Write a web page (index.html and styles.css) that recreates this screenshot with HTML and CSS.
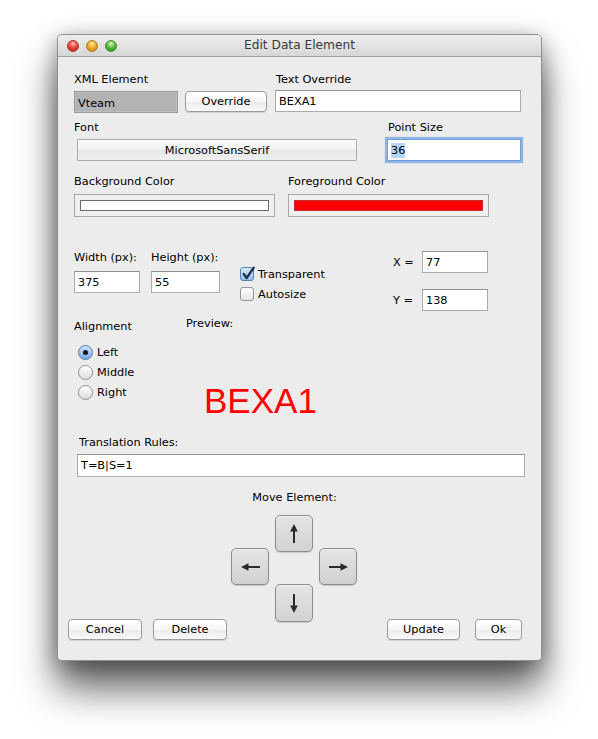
FILE: index.html
```html
<!DOCTYPE html>
<html>
<head>
<meta charset="utf-8">
<title>Edit Data Element</title>
<link rel="stylesheet" href="styles.css">
</head>
<body>
<div class="window">
  <div class="titlebar">
    <div class="lights">
      <span class="light red"></span>
      <span class="light yellow"></span>
      <span class="light green"></span>
    </div>
    <div class="title">Edit Data Element</div>
    <div></div>
  </div>
  <div class="content">
    <div class="row r1">
      <div class="c-xml">
        <div class="label">XML Element</div>
        <div class="hrow">
          <div class="field vteam">Vteam</div>
          <button class="btn override">Override</button>
        </div>
      </div>
      <div class="c-tov">
        <div class="label pl1">Text Override</div>
        <div class="field tov">BEXA1</div>
      </div>
    </div>

    <div class="row r2">
      <div class="c-font">
        <div class="label">Font</div>
        <button class="fontbtn">MicrosoftSansSerif</button>
      </div>
      <div class="c-pt">
        <div class="label pl1">Point Size</div>
        <div class="field pt focus"><span class="sel">36</span></div>
      </div>
    </div>

    <div class="row r3">
      <div class="c-bg">
        <div class="label">Background Color</div>
        <div class="well"><div class="swatch white"></div></div>
      </div>
      <div class="c-fg">
        <div class="label">Foreground Color</div>
        <div class="well"><div class="swatch red"></div></div>
      </div>
    </div>

    <div class="row r4">
      <div class="c-w">
        <div class="label">Width (px):</div>
        <div class="field wfield">375</div>
      </div>
      <div class="c-h">
        <div class="label">Height (px):</div>
        <div class="field hfield">55</div>
      </div>
      <div class="c-cb">
        <div class="cbrow">
          <span class="checkbox checked">
            <svg width="14" height="14" viewBox="0 0 14 14"><path d="M2.6 6.8 L5.6 11 L12.8 0.6" fill="none" stroke="#1b2b44" stroke-width="2.2" stroke-linecap="round" stroke-linejoin="round"/></svg>
          </span>
          <span>Transparent</span>
        </div>
        <div class="cbrow">
          <span class="checkbox"></span>
          <span>Autosize</span>
        </div>
      </div>
      <div class="c-xy">
        <div class="xyrow">
          <span class="xylabel">X =</span>
          <div class="field xyfield">77</div>
        </div>
        <div class="xyrow yrow">
          <span class="xylabel">Y =</span>
          <div class="field xyfield">138</div>
        </div>
      </div>
    </div>

    <div class="row r5">
      <div class="c-align">
        <div class="label">Alignment</div>
        <div class="radios">
          <div class="radiorow"><span class="radio on"><span class="dot"></span></span><span>Left</span></div>
          <div class="radiorow"><span class="radio"></span><span>Middle</span></div>
          <div class="radiorow"><span class="radio"></span><span>Right</span></div>
        </div>
      </div>
      <div class="c-prev">
        <div class="label">Preview:</div>
        <div class="preview">BEXA1</div>
      </div>
    </div>

    <div class="label tr-label">Translation Rules:</div>
    <div class="field trfield">T=B|S=1</div>

    <div class="bottom">
      <div class="bgroup">
        <button class="btn cancel">Cancel</button>
        <button class="btn delete">Delete</button>
      </div>
      <div class="move">
        <div class="label center">Move Element:</div>
        <div class="pad">
          <button class="abtn up">
            <svg width="8" height="19" viewBox="0 0 8 19"><path d="M4 0 L7.8 7.5 L0.2 7.5 Z" fill="#2a2a2a"/><rect x="3" y="6" width="2" height="13" fill="#2a2a2a"/></svg>
          </button>
          <button class="abtn left">
            <svg width="19" height="8" viewBox="0 0 19 8"><path d="M0 4 L7.5 0.2 L7.5 7.8 Z" fill="#2a2a2a"/><rect x="6" y="3" width="13" height="2" fill="#2a2a2a"/></svg>
          </button>
          <button class="abtn right">
            <svg width="19" height="8" viewBox="0 0 19 8"><path d="M19 4 L11.5 0.2 L11.5 7.8 Z" fill="#2a2a2a"/><rect x="0" y="3" width="13" height="2" fill="#2a2a2a"/></svg>
          </button>
          <button class="abtn down">
            <svg width="8" height="19" viewBox="0 0 8 19"><path d="M4 19 L7.8 11.5 L0.2 11.5 Z" fill="#2a2a2a"/><rect x="3" y="0" width="2" height="13" fill="#2a2a2a"/></svg>
          </button>
        </div>
      </div>
      <div class="bgroup">
        <button class="btn update">Update</button>
        <button class="btn ok">Ok</button>
      </div>
    </div>
  </div>
</div>
</body>
</html>
```

FILE: styles.css
```css
* { box-sizing: border-box; }

html, body {
  height: 739px;
}

body {
  margin: 0;
  overflow: hidden;
  background: #ffffff;
  font-family: "DejaVu Sans", "Liberation Sans", sans-serif;
  font-size: 11.3px;
  color: #000;
}

.window {
  margin: 34px 0 0 57px;
  width: 485px;
  height: 627px;
  background: #ececec;
  border: 1px solid #8f8f8f;
  border-radius: 5px 5px 4px 4px;
  box-shadow: 0 28px 38px rgba(0, 0, 0, 0.6), 0 4px 22px rgba(0, 0, 0, 0.35);
  overflow: hidden;
}

.titlebar {
  height: 22px;
  border-bottom: 1px solid #a2a2a2;
  background: linear-gradient(#eeeeee, #d7d7d7);
  display: grid;
  grid-template-columns: 1fr auto 1fr;
  align-items: center;
}

.lights {
  display: flex;
  gap: 7px;
  padding-left: 9px;
}

.light {
  width: 12px;
  height: 12px;
  border-radius: 50%;
}
.light.red {
  background: radial-gradient(circle at 50% 28%, #ffd2cc 0, #f5655a 30%, #d8291f 70%, #f0584c 100%);
  border: 1px solid #a8362e;
}
.light.yellow {
  background: radial-gradient(circle at 50% 28%, #fff0c0 0, #f6c145 30%, #de8f10 70%, #f5b83a 100%);
  border: 1px solid #b07a22;
}
.light.green {
  background: radial-gradient(circle at 50% 28%, #e4ffd6 0, #7fd05e 30%, #3a9e22 70%, #72c954 100%);
  border: 1px solid #4e8a36;
}

.title {
  font-size: 12.2px;
  color: #3a3a3a;
  line-height: 21px;
}

.content {
  padding: 16px 0 0 16px;
}

.row { display: flex; }

.label {
  line-height: 14px;
  white-space: nowrap;
}
.pl1 { padding-left: 1px; }
.center { text-align: center; }

.field {
  height: 22px;
  background: #ffffff;
  border: 1px solid #ababab;
  border-top-color: #8f8f8f;
  padding: 0 3px;
  display: flex;
  align-items: center;
  white-space: nowrap;
}

.btn {
  font: inherit;
  color: #000;
  height: 21px;
  padding: 0;
  border: 1px solid #9c9c9c;
  border-radius: 4px;
  background: linear-gradient(#ffffff, #f6f6f6 50%, #ececec 52%, #f8f8f8);
  box-shadow: 0 1px 1px rgba(0, 0, 0, 0.12);
  display: flex;
  align-items: center;
  justify-content: center;
}

/* row 1 */
.c-xml { width: 201px; }
.hrow {
  display: flex;
  align-items: flex-start;
  margin-top: 3px;
}
.vteam {
  width: 104px;
  margin-top: 1px;
  padding-top: 2px;
  background: #b3b3b3;
  border: 1px solid #9b9b9b;
  box-shadow: inset 0 0 0 1px #bdbdbd;
}
.override {
  width: 82px;
  margin-left: 7px;
  margin-top: 1px;
}
.tov {
  width: 246px;
  margin-top: 3px;
}

/* row 2 */
.r2 { margin-top: 8px; }
.c-font { width: 313px; }
.fontbtn {
  font: inherit;
  color: #000;
  display: block;
  width: 280px;
  height: 22px;
  margin: 4px 0 0 3px;
  padding: 0;
  border: 1px solid #a9a9a9;
  border-radius: 1px;
  background: linear-gradient(#fbfbfb, #f1f1f1 50%, #e7e7e7 52%, #efefef);
}
.pt {
  width: 134px;
  margin-top: 4px;
}
.focus {
  border: 1px solid #6f9fd8;
  box-shadow: 0 0 1px 2px #8fb6e7;
}
.sel {
  background: #b5d5fd;
  padding: 1px 0;
}

/* row 3 */
.r3 { margin-top: 14px; }
.c-bg { width: 214px; }
.well {
  width: 201px;
  height: 23px;
  margin-top: 5px;
  border: 1px solid #a8a8a8;
  background: #efefef;
  padding: 5px;
}
.swatch {
  height: 11px;
  border: 1px solid #6a6a6a;
}
.swatch.white { background: #ffffff; }
.swatch.red {
  background: #ff0000;
  border-color: #c03030;
}

/* row 4 */
.r4 { margin-top: 34px; }
.c-w { width: 77px; }
.c-h { width: 89px; }
.wfield { width: 66px; margin-top: 6px; }
.hfield { width: 69px; margin-top: 6px; }
.c-cb {
  width: 153px;
  padding-top: 13px;
}
.cbrow {
  height: 20px;
  display: flex;
  align-items: center;
}
.checkbox {
  width: 14px;
  height: 14px;
  margin-right: 4px;
  border: 1px solid #959595;
  border-radius: 3px;
  background: linear-gradient(#ffffff, #e3e3e3);
  position: relative;
  flex: none;
}
.checkbox.checked {
  background: linear-gradient(#d6e7f9, #93bfee);
  border-color: #5a82b0;
}
.checkbox svg {
  position: absolute;
  left: 0;
  top: -1px;
  overflow: visible;
}
.xyrow {
  display: flex;
  align-items: center;
}
.yrow { margin-top: 16px; }
.xylabel { width: 29px; }
.xyfield { width: 66px; }

/* row 5 */
.r5 { margin-top: 6px; }
.c-align {
  width: 112px;
  padding-top: 3px;
}
.radios { margin-top: 8px; }
.radiorow {
  height: 20px;
  display: flex;
  align-items: center;
}
.radio {
  width: 15px;
  height: 15px;
  margin: 0 4px 0 4px;
  border-radius: 50%;
  border: 1px solid #909090;
  background: linear-gradient(#ffffff, #dcdcdc);
  display: flex;
  align-items: center;
  justify-content: center;
  flex: none;
}
.radio.on {
  border-color: #55799f;
  background: linear-gradient(#cfe3f8, #76aae6);
}
.dot {
  width: 5px;
  height: 5px;
  border-radius: 50%;
  background: #151515;
}
.preview {
  margin: 50px 0 0 18px;
  font-family: "Liberation Sans", Arial, sans-serif;
  font-size: 35px;
  line-height: 40px;
  color: #ff0000;
}

/* translation rules */
.tr-label {
  margin-top: 15px;
  padding-left: 5px;
}
.trfield {
  width: 448px;
  height: 23px;
  margin: 4px 0 0 3px;
}

/* bottom */
.bottom {
  display: flex;
  align-items: flex-end;
  margin: 14px 0 0 -6px;
}
.bgroup { display: flex; }
.cancel { width: 74px; }
.delete { width: 74px; margin-left: 11px; }
.move {
  width: 127px;
  margin-left: 4px;
  padding-bottom: 18px;
}
.pad {
  margin-top: 10px;
  display: grid;
  grid-template-columns: 38px 38px 38px;
  grid-template-rows: 33px 36px 38px;
  column-gap: 6px;
}
.abtn {
  padding: 0;
  width: 38px;
  height: 37px;
  border: 1px solid #8c8c8c;
  border-radius: 5px;
  background: linear-gradient(#e4e4e4, #d2d2d2);
  box-shadow: inset 0 1px 0 #f2f2f2, 0 1px 1px rgba(0, 0, 0, 0.15);
  display: flex;
  align-items: center;
  justify-content: center;
}
.abtn.up { grid-column: 2; grid-row: 1; }
.abtn.left { grid-column: 1; grid-row: 2; }
.abtn.right { grid-column: 3; grid-row: 2; }
.abtn.down { grid-column: 2; grid-row: 3; height: 38px; }
.update { width: 73px; margin-left: 29px; }
.ok { width: 47px; margin-left: 15px; }
```
